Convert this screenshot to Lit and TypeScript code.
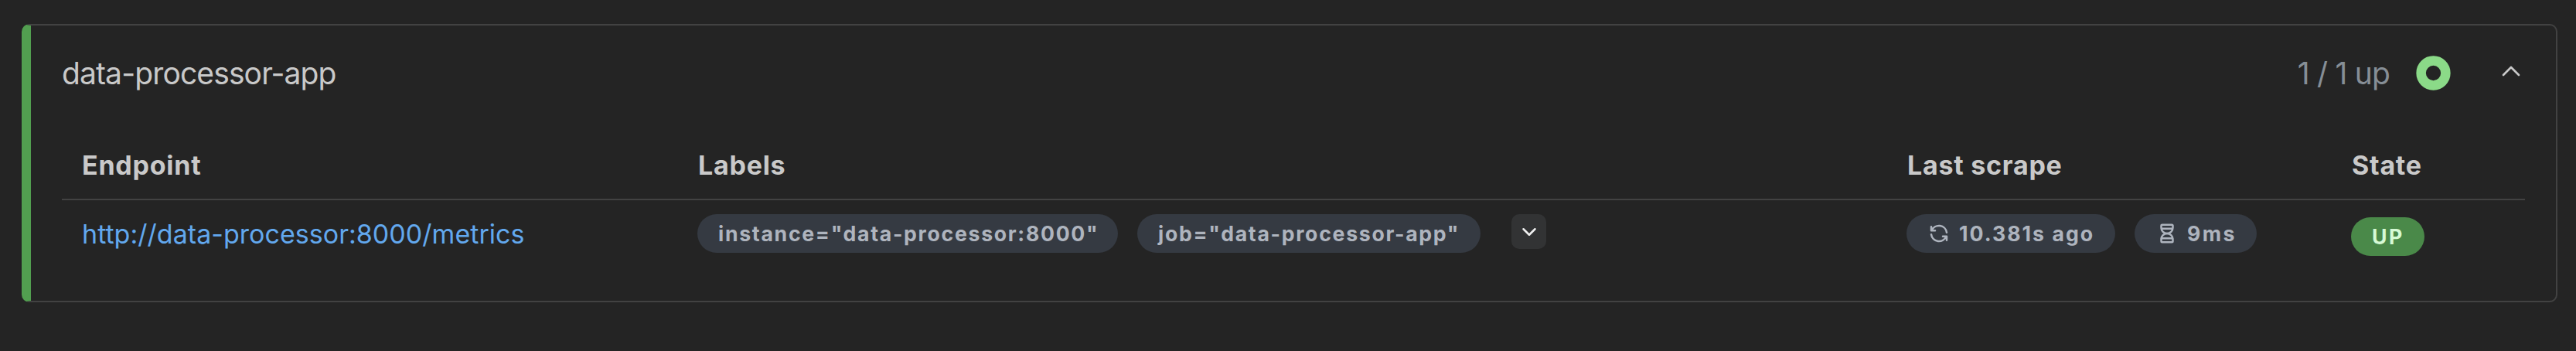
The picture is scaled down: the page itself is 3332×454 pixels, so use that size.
import { LitElement, html, css, svg } from "lit";
import { customElement } from "lit/decorators.js";

const icon = (paths: string[], cls: string) => html`<svg
  class="icon ${cls}" viewBox="0 0 24 24" fill="none" stroke="currentColor"
  stroke-linecap="round" stroke-linejoin="round">${paths.map((d) => svg`<path d=${d}></path>`)}</svg>`;

const REFRESH = ["M20 11a8.1 8.1 0 0 0 -15.5 -2m-.5 -4v4h4", "M4 13a8.1 8.1 0 0 0 15.5 2m.5 4v-4h-4"];
const HOURGLASS = [
  "M6.5 7h11",
  "M6.5 17h11",
  "M6 20v-2a6 6 0 1 1 12 0v2a1 1 0 0 1 -1 1h-10a1 1 0 0 1 -1 -1z",
  "M6 4v2a6 6 0 1 0 12 0v-2a1 1 0 0 0 -1 -1h-10a1 1 0 0 0 -1 1z",
];
const CHEVRON_DOWN = ["M6 9l6 6l6 -6"];
const CHEVRON_UP = ["M6 15l6 -6l6 6"];

@customElement("app-root")
export class AppRoot extends LitElement {
  static styles = css`
    :host {
      display: block;
      box-sizing: border-box;
      height: 454px;
      padding: 31px 24px 63px 28px;
      background: #242424;
      color: #c9c9c9;
      font-family: Inter, "Liberation Sans", sans-serif;
      font-size: 34px;
    }
    .card {
      box-sizing: border-box;
      height: 360px;
      border: 2px solid #424242;
      border-left: 12px solid #529f50;
      border-radius: 10px;
      padding: 0 40px;
    }
    .head {
      display: flex;
      align-items: center;
      height: 122px;
      font-size: 39px;
      letter-spacing: -0.8px;
    }
    .title { flex: 1; letter-spacing: -0.87px; }
    .count { color: #868e96; margin-right: 34px; }
    .ring { width: 45px; height: 45px; margin-right: 58px; display: block; }
    .icon { display: block; flex: none; width: 30px; height: 30px; stroke-width: 2; }
    .toggle { width: 40px; height: 40px; stroke-width: 1.6; margin: -5px -2px 0 0; }
    .row {
      display: grid;
      grid-template-columns: 797px 1564px 575px 250px;
    }
    .row > * { padding: 0 25px; white-space: nowrap; }
    .names {
      height: 102px;
      border-bottom: 2px solid #424242;
      font-weight: 700;
      letter-spacing: 0.75px;
    }
    .names > * { line-height: 118px; padding-left: 26px; }
    .values { padding-top: 18px; align-items: start; }
    .values .link {
      padding-left: 26px;
      color: #62a8ee;
      text-decoration: none;
      line-height: 51px;
      letter-spacing: 0.03px;
    }
    .badges { display: flex; gap: 25px; }
    .badge {
      display: flex;
      align-items: center;
      box-sizing: border-box;
      height: 50px;
      padding: 0 27px;
      border-radius: 25px;
      background: #353a42;
      color: #aeb4be;
      font-size: 26.7px;
      font-weight: 700;
      letter-spacing: 1.68px;
    }
    .badge .icon { margin-right: 11px; }
    .instance { width: 544px; }
    .job { width: 444px; }
    .scrape { width: 270px; letter-spacing: 2px; }
    .took { width: 158px; letter-spacing: 2.4px; }
    .up {
      width: 95px;
      margin-top: 4px;
      background: #4a8949;
      color: #d6fad5;
      letter-spacing: 2.4px;
    }
    .more {
      display: grid;
      place-items: center;
      width: 45px;
      height: 45px;
      margin-left: 15px;
      padding: 0;
      border: 0;
      border-radius: 10px;
      background: #323334;
      color: #f0f0f0;
    }
  `;

  render() {
    return html`
      <section class="card">
        <header class="head">
          <span class="title">data-processor-app</span>
          <span class="count">1 / 1 up</span>
          <svg class="ring" viewBox="0 0 45 45"><circle cx="22.5" cy="22.5" r="15.9" fill="none" stroke="#8bda88" stroke-width="12.5"></circle></svg>
          ${icon(CHEVRON_UP, "toggle")}
        </header>
        <div class="row names">
          <span>Endpoint</span><span>Labels</span><span>Last scrape</span><span>State</span>
        </div>
        <div class="row values">
          <a class="link">http://data-processor:8000/metrics</a>
          <div class="badges">
            <span class="badge instance">instance="data-processor:8000"</span>
            <span class="badge job">job="data-processor-app"</span>
            <button class="more">${icon(CHEVRON_DOWN, "")}</button>
          </div>
          <div class="badges">
            <span class="badge scrape">${icon(REFRESH, "")}10.381s ago</span>
            <span class="badge took">${icon(HOURGLASS, "")}9ms</span>
          </div>
          <div><span class="badge up">UP</span></div>
        </div>
      </section>`;
  }
}
